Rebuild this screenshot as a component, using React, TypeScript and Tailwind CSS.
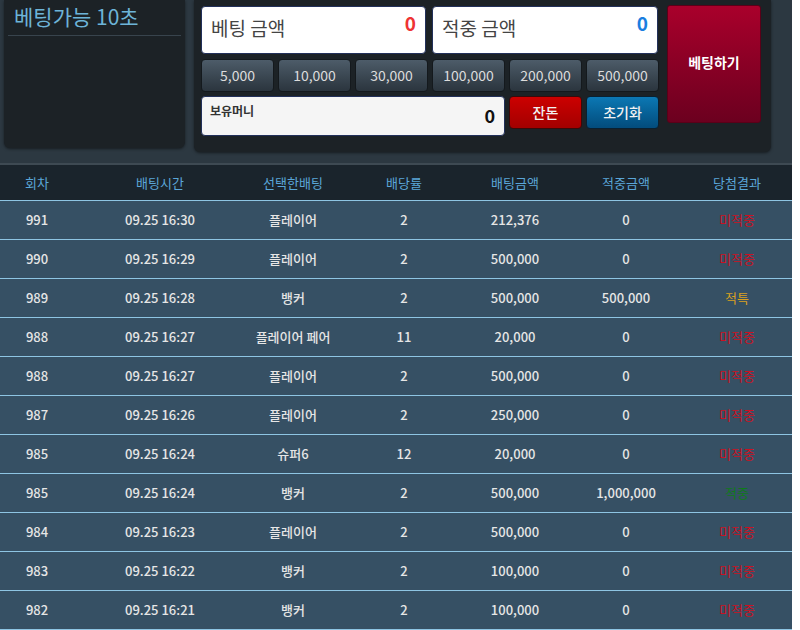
import React from "react";

const rows: [string, string, string, string, string, string, string][] = [
  ["991", "09.25 16:30", "플레이어", "2", "212,376", "0", "미적중"],
  ["990", "09.25 16:29", "플레이어", "2", "500,000", "0", "미적중"],
  ["989", "09.25 16:28", "뱅커", "2", "500,000", "500,000", "적특"],
  ["988", "09.25 16:27", "플레이어 페어", "11", "20,000", "0", "미적중"],
  ["988", "09.25 16:27", "플레이어", "2", "500,000", "0", "미적중"],
  ["987", "09.25 16:26", "플레이어", "2", "250,000", "0", "미적중"],
  ["985", "09.25 16:24", "슈퍼6", "12", "20,000", "0", "미적중"],
  ["985", "09.25 16:24", "뱅커", "2", "500,000", "1,000,000", "적중"],
  ["984", "09.25 16:23", "플레이어", "2", "500,000", "0", "미적중"],
  ["983", "09.25 16:22", "뱅커", "2", "100,000", "0", "미적중"],
  ["982", "09.25 16:21", "뱅커", "2", "100,000", "0", "미적중"],
];

const resultColor = (r: string) =>
  r === "적중" ? "text-[#0f7a1a]" : r === "적특" ? "text-[#d9a020]" : "text-[#cc1122]";

const chips = ["5,000", "10,000", "30,000", "100,000", "200,000", "500,000"];
const cols = "grid grid-cols-[74px_172px_94px_128px_94px_128px_102px]";

export default function App() {
  return (
    <div
      className="w-[792px] bg-[#2c3841]"
      style={{ fontFamily: '"Noto Sans CJK KR", "Noto Sans", sans-serif' }}
    >
      <div className="flex h-[163px] items-start pl-[4px]">
        <div className="h-[148px] w-[181px] rounded-b-md bg-[#1c2226] px-[4px] shadow-[0_1px_3px_rgba(0,0,0,0.5)]">
          <div className="border-b border-[#38444d] pb-[3px] pl-[6px] text-[21px] leading-[32px] text-[#6db4d8]">
            베팅가능 10초
          </div>
        </div>
        <div className="ml-[9px] flex h-[152px] w-[577px] gap-[8px] rounded-b-md bg-[#1c2226] pl-[7px] pt-[5px] shadow-[0_1px_3px_rgba(0,0,0,0.5)]">
          <div className="flex w-[458px] flex-col pt-[1px]">
            <div className="flex gap-[6px]">
              <div className="flex h-[48px] w-[225px] items-start justify-between rounded-[4px] border border-[#22305a] bg-white px-[9px]">
                <span className="mt-[7px] text-[19px] leading-[28px] text-[#444]">베팅 금액</span>
                <span className="mt-[3px] text-[19px] font-semibold leading-[26px] text-[#ee3333]">0</span>
              </div>
              <div className="flex h-[48px] w-[226px] items-start justify-between rounded-[4px] border border-[#22305a] bg-white px-[9px]">
                <span className="mt-[7px] text-[19px] leading-[28px] text-[#444]">적중 금액</span>
                <span className="mt-[3px] text-[19px] font-semibold leading-[26px] text-[#1a7ee0]">0</span>
              </div>
            </div>
            <div className="mt-[5px] flex gap-[4px]">
              {chips.map((c) => (
                <div
                  key={c}
                  className="flex h-[33px] w-[73px] items-center justify-center rounded-[4px] border border-[#14191d] bg-gradient-to-b from-[#4d5c69] to-[#2b353e] text-[14px] text-[#dcdcdc]"
                >
                  {c}
                </div>
              ))}
            </div>
            <div className="mt-[4px] flex gap-[4px]">
              <div className="flex h-[40px] w-[304px] items-start justify-between rounded-[4px] border border-[#22305a] bg-[#f5f5f5] pl-[8px] pr-[9px]">
                <span className="mt-[4px] text-[12px] font-bold leading-[20px] text-[#333]">보유머니</span>
                <span className="mt-[6px] text-[18px] font-bold leading-[24px] text-[#111]">0</span>
              </div>
              <div className="flex h-[33px] w-[73px] items-center justify-center rounded-[4px] border border-[#3a0a0a] bg-gradient-to-b from-[#cc0000] to-[#a30000] text-[14px] font-medium text-[#f2f2f2]">
                잔돈
              </div>
              <div className="flex h-[33px] w-[73px] items-center justify-center rounded-[4px] border border-[#0a2030] bg-gradient-to-b from-[#0c78b4] to-[#034c7c] text-[14px] font-medium text-[#f2f2f2]">
                초기화
              </div>
            </div>
          </div>
          <div className="flex h-[118px] w-[94px] items-center justify-center rounded-[3px] border border-[#5a0018] bg-gradient-to-b from-[#a9002b] to-[#6c001f] pb-[4px] text-[14px] font-bold text-white">
            베팅하기
          </div>
        </div>
      </div>
      <div className="h-[2px] bg-[#3e4a53]" />
      <div className={`${cols} h-[36px] items-center border-b border-[#8ec5e3] bg-[#1a242c] text-center text-[13px] text-[#5aa6d8]`}>
        <div>회차</div>
        <div>배팅시간</div>
        <div>선택한배팅</div>
        <div>배당률</div>
        <div>배팅금액</div>
        <div>적중금액</div>
        <div className="pr-[8px]">당첨결과</div>
      </div>
      {rows.map((r, i) => (
        <div
          key={i}
          className={`${cols} h-[39px] items-center border-b border-[#8ec5e3] bg-[#365064] text-center text-[13px] font-medium text-[#e6e6e6]`}
        >
          <div>{r[0]}</div>
          <div>{r[1]}</div>
          <div>{r[2]}</div>
          <div>{r[3]}</div>
          <div>{r[4]}</div>
          <div>{r[5]}</div>
          <div className={`pr-[8px] font-normal ${resultColor(r[6])}`}>{r[6]}</div>
        </div>
      ))}
    </div>
  );
}
